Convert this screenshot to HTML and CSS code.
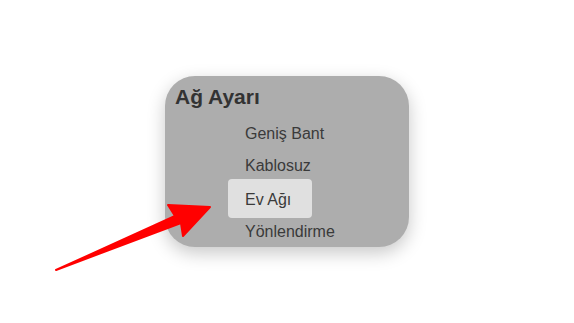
FILE: index.html
```html
<!DOCTYPE html>
<html lang="tr">
<head>
<meta charset="utf-8">
<title>Ağ Ayarı</title>
<link rel="stylesheet" href="styles.css">
</head>
<body>
<div class="stage">
  <section class="card">
    <h2 class="card-title">Ağ Ayarı</h2>
    <ul class="menu">
      <li class="menu-item">Geniş Bant</li>
      <li class="menu-item">Kablosuz</li>
      <li class="menu-item menu-item--active">Ev Ağı</li>
      <li class="menu-item">Yönlendirme</li>
    </ul>
  </section>
  <svg class="pointer" width="574" height="323" viewBox="0 0 574 323" aria-hidden="true">
    <polygon points="56,270 175,216 168,205 210,207 183,236 181,223" fill="#ff0000" stroke="#ff0000" stroke-width="2" stroke-linejoin="round"/>
  </svg>
</div>
</body>
</html>
```
FILE: styles.css
```css
html, body {
  margin: 0;
  padding: 0;
  background: #ffffff;
}

.stage {
  position: relative;
  width: 574px;
  height: 323px;
  display: flex;
  align-items: center;
  justify-content: center;
  font-family: "Liberation Sans", Arial, sans-serif;
}

.card {
  box-sizing: border-box;
  width: 244px;
  height: 171px;
  padding: 9px 10px 0;
  background: #adadad;
  border-radius: 30px;
  box-shadow: 0 6px 18px rgba(0, 0, 0, 0.22);
}

.card-title {
  margin: 0 0 8.5px;
  font-size: 21px;
  line-height: 24px;
  font-weight: bold;
  color: #333333;
}

.menu {
  list-style: none;
  margin: 0 0 0 53px;
  padding: 0;
  display: flex;
  flex-direction: column;
  align-items: flex-start;
}

.menu-item {
  padding: 7px 17px;
  font-size: 16px;
  line-height: 18px;
  color: #3a3a3a;
  white-space: nowrap;
}

.menu-item--active {
  box-sizing: border-box;
  width: 84px;
  margin: -3px 0 -2px;
  padding: 12px 0 9px 17px;
  background: #e0e0e0;
  border-radius: 4px;
}

.pointer {
  position: absolute;
  left: 0;
  top: 0;
  pointer-events: none;
}
```
